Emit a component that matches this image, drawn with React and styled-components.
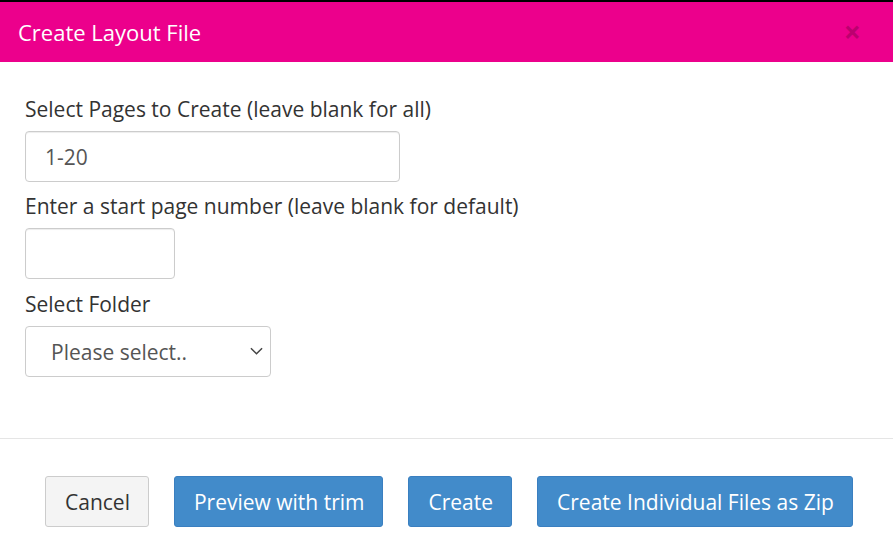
import React from "react";
import styled, { createGlobalStyle } from "styled-components";

const GlobalStyle = createGlobalStyle`
  html, body {
    margin: 0;
    padding: 0;
    background: #fff;
    font-family: "Open Sans", "Noto Sans", sans-serif;
  }
`;

export default function App() {
  return (
    <>
      <GlobalStyle />
      <Modal>
        <TopStrip />
        <Header>
          <Title>Create Layout File</Title>
          <Close aria-label="close">×</Close>
        </Header>
        <Body>
          <Group>
            <Label>Select Pages to Create (leave blank for all)</Label>
            <Input width={375} defaultValue="1-20" />
          </Group>
          <Group>
            <Label>Enter a start page number (leave blank for default)</Label>
            <Input width={150} />
          </Group>
          <Group last>
            <Label>Select Folder</Label>
            <SelectWrap>
              <Select defaultValue="">
                <option value="">Please select..</option>
              </Select>
              <Chevron viewBox="0 0 14 8" width="13" height="8">
                <path d="M1 1l6 6 6-6" fill="none" stroke="#444" strokeWidth="1.6" />
              </Chevron>
            </SelectWrap>
          </Group>
        </Body>
        <Footer>
          <Button>Cancel</Button>
          <Button primary>Preview with trim</Button>
          <Button primary>Create</Button>
          <Button primary>Create Individual Files as Zip</Button>
        </Footer>
      </Modal>
    </>
  );
}

const Modal = styled.div`
  width: 893px;
  height: 553px;
  background: #fff;
  overflow: hidden;
`;

const TopStrip = styled.div`
  height: 2px;
  background: #000;
`;

const Header = styled.div`
  height: 60px;
  background: #ec008c;
  display: flex;
  align-items: center;
  justify-content: space-between;
  padding: 0 32px 0 18px;
`;

const Title = styled.h4`
  margin: 0;
  color: #fff;
  font-size: 22px;
  font-weight: 400;
`;

const Close = styled.span`
  color: #000;
  opacity: 0.2;
  font-size: 30px;
  font-weight: 700;
  line-height: 1;
`;

const Body = styled.div`
  padding: 35px 25px 61px;
`;

const Group = styled.div`
  margin-bottom: 12px;
  padding-top: ${(p) => (p.last ? "1px" : "0")};

  &:last-child {
    margin-bottom: 0;
  }
`;

const Label = styled.label`
  display: block;
  color: #333;
  font-size: 21px;
  line-height: 24px;
  margin-bottom: 10px;
`;

const Input = styled.input`
  box-sizing: border-box;
  display: block;
  width: ${(p) => p.width}px;
  height: 51px;
  padding: 0 19px;
  border: 1px solid #ccc;
  border-radius: 4px;
  box-shadow: inset 0 1px 1px rgba(0, 0, 0, 0.075);
  font-family: inherit;
  font-size: 21px;
  color: #555;
  outline: none;
`;

const SelectWrap = styled.div`
  position: relative;
  width: 246px;
`;

const Select = styled.select`
  box-sizing: border-box;
  width: 100%;
  height: 51px;
  padding: 0 25px;
  border: 1px solid #ccc;
  border-radius: 4px;
  background: #fff;
  appearance: none;
  font-family: inherit;
  font-size: 21px;
  color: #555;
  outline: none;
`;

const Chevron = styled.svg`
  position: absolute;
  right: 8px;
  top: 21px;
  pointer-events: none;
`;

const Footer = styled.div`
  border-top: 1px solid #e5e5e5;
  display: flex;
  gap: 25px;
  padding: 37px 0 0 45px;
`;

const Button = styled.button`
  flex-shrink: 0;
  white-space: nowrap;
  height: 51px;
  padding: 0 18px 0 19px;
  border-radius: 3px;
  border: 1px solid ${(p) => (p.primary ? "#3a7fc0" : "#ccc")};
  background: ${(p) => (p.primary ? "#428bca" : "#f4f4f4")};
  color: ${(p) => (p.primary ? "#fff" : "#333")};
  font-family: inherit;
  font-size: 21px;
  cursor: pointer;
`;
